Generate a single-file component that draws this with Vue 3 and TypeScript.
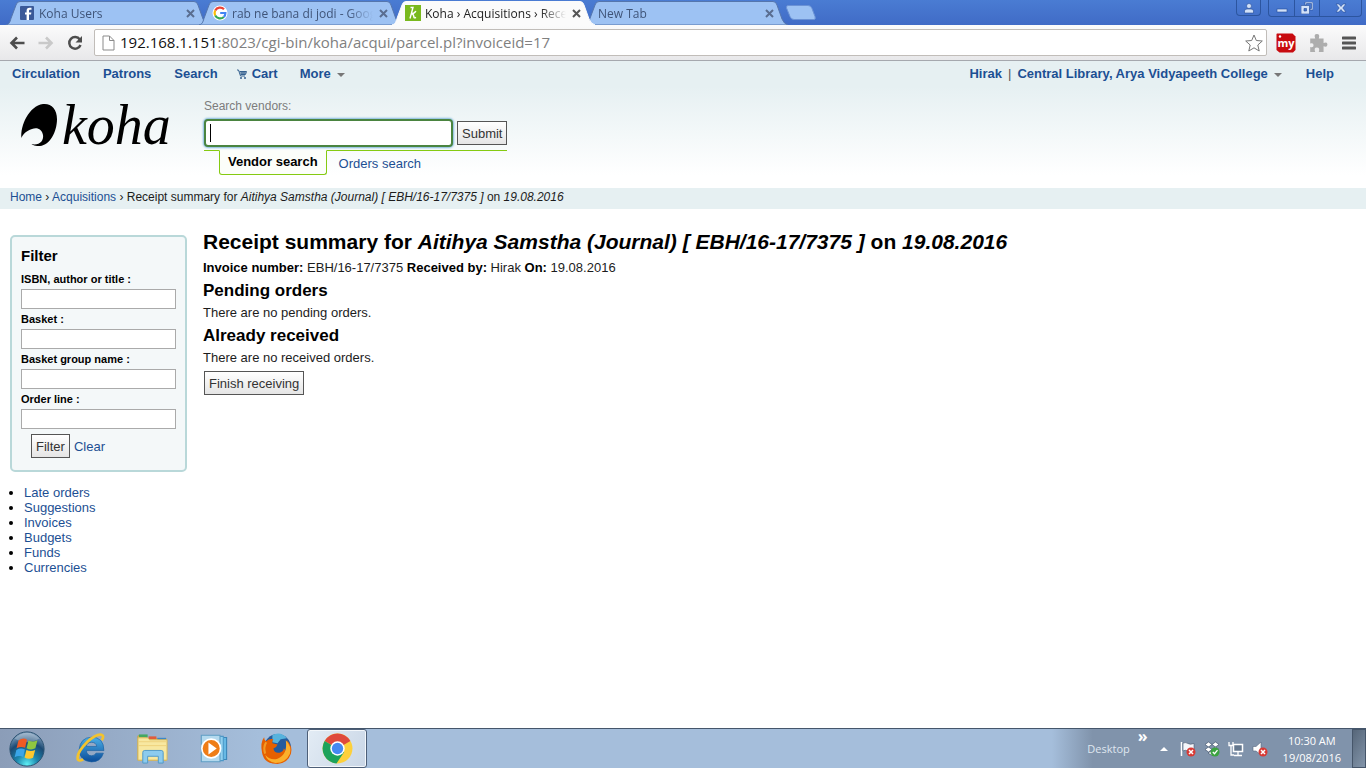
<script setup lang="ts">
import { ref } from 'vue'

interface Tab { title: string; icon: '' | 'facebook' | 'google' | 'koha'; active: boolean }

const tabs: Tab[] = [
  { title: 'Koha Users', icon: 'facebook', active: false },
  { title: 'rab ne bana di jodi - Goog', icon: 'google', active: false },
  { title: 'Koha › Acquisitions › Rece', icon: 'koha', active: true },
  { title: 'New Tab', icon: '', active: false },
]
const fields: { id: string; label: string }[] = [
  { id: 'isbn', label: 'ISBN, author or title :' },
  { id: 'basket', label: 'Basket :' },
  { id: 'group', label: 'Basket group name :' },
  { id: 'order', label: 'Order line :' },
]
const links: string[] = ['Late orders', 'Suggestions', 'Invoices', 'Budgets', 'Funds', 'Currencies']
const vendor = ref('')
</script>

<template>
  <div class="screen">
    <header class="strip">
      <div v-for="tab in tabs" :key="tab.title" class="tab" :class="{ active: tab.active }">
        <svg class="shape" viewBox="0 0 203 24" preserveAspectRatio="none" aria-hidden="true">
          <path d="M0 24 C4 23 4 20 5.500 16 L10 4 Q11 .5 14 .5 H188 Q191 .5 192 4 L197 18 Q199 23 203 24Z" />
        </svg>
        <svg v-if="tab.icon === 'facebook'" class="favicon" viewBox="0 0 16 16" aria-hidden="true">
          <rect x="1" y="1" width="14" height="14" rx="1" fill="#3b5998" />
          <path d="M10 15V9.600h2l.4-2.200H10V6c0-.8.4-1.200 1.300-1.200h1.200v-2h-1.900C8.500 2.800 7.600 4 7.600 5.700v1.700H6v2.200h1.600V15z" fill="#fff" />
        </svg>
        <svg v-else-if="tab.icon === 'google'" class="favicon" viewBox="0 0 16 16" aria-hidden="true">
          <circle cx="8" cy="8" r="7.500" fill="#fff" />
          <g fill="none" stroke-width="2.200">
            <path d="M12 4.200A5.500 5.500 0 0 0 3.200 5.500" stroke="#ea4335" />
            <path d="M3.200 5.500a5.500 5.500 0 0 0 0 5" stroke="#fbbc05" />
            <path d="M3.200 10.500a5.500 5.500 0 0 0 8.600 1.500" stroke="#34a853" />
            <path d="M11.800 12A5.500 5.500 0 0 0 13.400 8H8.200" stroke="#4285f4" />
          </g>
        </svg>
        <svg v-else-if="tab.icon === 'koha'" class="favicon" viewBox="0 0 16 16" aria-hidden="true">
          <rect width="16" height="16" fill="#79b91e" />
          <path d="M5.500 2.500h2.500L5 13.500M6.300 9q4-1 4.500-3M7 8.800q1.500.2 1.900 3.200.3 1.500 2.100.3" fill="none" stroke="#fff" stroke-width="1.400" />
        </svg>
        <span class="title">{{ tab.title }}</span>
        <button class="close" type="button" aria-label="Close tab">
          <svg viewBox="0 0 9 9"><path d="M1 1l7 7M8 1l-7 7" /></svg>
        </button>
      </div>
      <button class="newtab" type="button" aria-label="Open new tab">
        <svg viewBox="0 0 32 15"><path d="M3 .5h20q3 0 4 3l3 8q1 3-1 3H9q-3 0-4-3L1.500 3Q1 .5 3 .5z" /></svg>
      </button>
      <div class="window">
        <button class="user" type="button" aria-label="Profile"><svg viewBox="0 0 12 12"><circle cx="6" cy="4" r="2.500" /><path d="M1.500 11V9q0-2 2.500-2h4q2.500 0 2.500 2v2z" /></svg></button>
        <div class="group">
          <button type="button" aria-label="Minimise"><svg viewBox="0 0 12 12"><rect x="1" y="7" width="10" height="3" /></svg></button>
          <button type="button" aria-label="Restore"><svg viewBox="0 0 12 12"><path d="M4 0h8v8H9V6.500h1.500v-5h-5V3H4z M0 3.500h8.500V12H0z M3 6.500V9h2.500V6.500z" fill-rule="evenodd" /></svg></button>
          <button class="wide" type="button" aria-label="Close"><svg viewBox="0 0 12 12"><path d="M1 2h3l2 2.500L8 2h3L7.800 6 11 10H8L6 7.500 4 10H1l3.200-4z" /></svg></button>
        </div>
      </div>
    </header>

    <div class="toolbar">
      <button type="button" aria-label="Back"><svg viewBox="0 0 16 16"><path d="M15.500 8H3M8 2.500L2.500 8 8 13.500" fill="none" stroke="#4d4d4d" stroke-width="2.600" /></svg></button>
      <button type="button" aria-label="Forward"><svg viewBox="0 0 16 16"><path d="M.5 8h12.500M8 2.500L13.500 8 8 13.500" fill="none" stroke="#c9c9c9" stroke-width="2.600" /></svg></button>
      <button type="button" aria-label="Reload"><svg viewBox="0 0 16 16"><path d="M12.800 4.500A5.800 5.800 0 1 0 13.500 10" fill="none" stroke="#4d4d4d" stroke-width="2.500" /><path d="M15 1v6.500H8.500z" fill="#4d4d4d" /></svg></button>
      <div class="address">
        <svg class="page" viewBox="0 0 13 16" aria-hidden="true"><path d="M1 1h6.500L12 5.500V15H1zM7.500 1v4.500H12" fill="#fff" stroke="#8b8b8b" /></svg>
        <span class="url"><b>192.168.1.151</b>:8023/cgi-bin/koha/acqui/parcel.pl?invoiceid=17</span>
        <button class="star" type="button" aria-label="Bookmark this page"><svg viewBox="0 0 18 18"><path d="M9 1l2.300 5.500 6 .5-4.500 4 1.400 6L9 13.800 3.800 17l1.400-6L.7 7l6-.5z" fill="#fff" stroke="#777" /></svg></button>
      </div>
      <button class="ext" type="button"><svg viewBox="0 0 20 20" aria-hidden="true"><path d="M1 .5h15.500l3 3V17l-2.500 2.500H3.500L.5 17V1z" fill="#c80b10" /><circle cx="4" cy="3.500" r="1.200" fill="#fff" /><text x="10" y="14" text-anchor="middle" font-family="Open Sans, sans-serif" font-weight="700" font-size="11" fill="#fff">my</text></svg></button>
      <button class="ext" type="button" aria-label="Extension"><svg viewBox="0 0 18 18"><path d="M2 5h4.500Q5 1 8 1t1.700 4H14v4q3.500-1.500 3.500 1.300T14 12v5H9.700Q11 13 8 13t-1.500 4H2v-4.500q3 1 3-1.500T2 9.500z" fill="#adadad" /></svg></button>
      <button class="menu" type="button" aria-label="Menu"><svg viewBox="0 0 14 14"><path d="M1 2h12M1 7h12M1 12h12" stroke="#555" stroke-width="3" stroke-linecap="round" /></svg></button>
    </div>

    <main class="site">
      <div class="masthead">
        <nav class="nav">
          <a href="#">Circulation</a>
          <a href="#">Patrons</a>
          <a href="#">Search</a>
          <a href="#" class="cart"><svg viewBox="0 0 10 10" aria-hidden="true"><path d="M0 1h1.500l2 6H8M2.500 2.500h7L8.500 5.500h-5M5 2.500v3M7 2.500v3M3 4h6" fill="none" stroke="#34618f" /><circle cx="4" cy="9" r="1" fill="#34618f" /><circle cx="8" cy="9" r="1" fill="#34618f" /></svg>Cart</a>
          <a href="#" class="more">More<i class="caret"></i></a>
          <div class="account">
            <a href="#">Hirak</a><span class="bar">|</span><a href="#">Central Library, Arya Vidyapeeth College<i class="caret"></i></a><a href="#" class="help">Help</a>
          </div>
        </nav>
        <div class="brand">
          <a class="logo" href="#" aria-label="koha">
            <svg viewBox="0 0 38 44" aria-hidden="true"><path d="M23 1C31 0 37 6 37 16C37 29 30 42 20 43C15 43.500 11 41 11 41C19 43 24 38 23 32C22 26 17 24 12 26C6 28 3 31 1.500 35C0 23 9 3 23 1Z" fill="#000" /></svg>
            <span>koha</span>
          </a>
          <form class="search" @submit.prevent>
            <label for="vendor">Search vendors:</label>
            <div class="row">
              <span class="box"><input id="vendor" v-model="vendor" type="text" autocomplete="off" /><i class="cursor"></i></span>
              <button class="push" type="submit">Submit</button>
            </div>
            <div class="modes"><a href="#" class="on">Vendor search</a><a href="#">Orders search</a></div>
          </form>
        </div>
      </div>

      <div class="crumbs"><a href="#">Home</a> › <a href="#">Acquisitions</a> › Receipt summary for <em>Aitihya Samstha (Journal) [ EBH/16-17/7375 ]</em> on <em>19.08.2016</em></div>

      <div class="columns">
        <aside>
          <form class="filter" @submit.prevent>
            <h4>Filter</h4>
            <div v-for="field in fields" :key="field.id" class="field">
              <label :for="field.id">{{ field.label }}</label>
              <input :id="field.id" type="text" />
            </div>
            <div class="actions"><button class="push" type="submit">Filter</button><a href="#">Clear</a></div>
          </form>
          <ul><li v-for="link in links" :key="link"><a href="#">{{ link }}</a></li></ul>
        </aside>
        <section class="content">
          <h1>Receipt summary for <em>Aitihya Samstha (Journal) [ EBH/16-17/7375 ]</em> on <em>19.08.2016</em></h1>
          <p><b>Invoice number:</b> EBH/16-17/7375 <b>Received by:</b> Hirak <b>On:</b> 19.08.2016</p>
          <h2>Pending orders</h2>
          <p>There are no pending orders.</p>
          <h2>Already received</h2>
          <p>There are no received orders.</p>
          <button class="push" type="button">Finish receiving</button>
        </section>
      </div>
    </main>

    <footer class="taskbar">
      <button class="start" type="button" aria-label="Start">
        <svg viewBox="0 0 40 40">
          <defs>
            <radialGradient id="orb" cx=".5" cy=".95" r=".9"><stop offset="0" stop-color="#5ff0f5" /><stop offset=".35" stop-color="#1c86ad" /><stop offset=".7" stop-color="#1b4a74" /><stop offset="1" stop-color="#7d9cba" /></radialGradient>
          </defs>
          <circle cx="20" cy="20" r="18" fill="url(#orb)" stroke="#29506f" />
          <path d="M7 9Q20-3 33 9 20 17 7 9z" fill="#fff" opacity=".25" />
          <path d="M11 11q5-3.500 9-.8l-2 8.600q-4.500-2.200-9 .5z" fill="#ee5a24" />
          <path d="M21.500 11q4.500 2.200 9.500-.3l-2.200 8.600q-4.800 2.300-9.200-.2z" fill="#8fc740" />
          <path d="M8.800 21q4.500-2.700 9-.5L16 28.500q-4.500-2.200-9 .3z" fill="#3aa5e8" />
          <path d="M19.400 21q4.500 2.200 9.200.1l-2.200 8q-4.500 2.200-9-.2z" fill="#fdc82f" />
        </svg>
      </button>
      <button type="button" aria-label="Internet Explorer">
        <svg viewBox="0 0 32 32">
          <defs><linearGradient id="ie" x1="0" y1="0" x2="0" y2="1"><stop offset="0" stop-color="#4bb0e8" /><stop offset="1" stop-color="#0b4c99" /></linearGradient></defs>
          <path d="M29 18H12q.5 5 5 5 3.200 0 4.300-2.500H28.500Q26 29 17 29 5 28 5 17 6 5.500 17 5 29 5 29 18zM12 14h10q-.6-4-5-4t-5 4z" fill="url(#ie)" stroke="#175f9f" stroke-width=".6" />
          <path d="M27 8q3-5-1-5.500-5-.5-13 7-9 9-9.500 15-.2 5 5.500 2" fill="none" stroke="#f3c32e" stroke-width="2.600" />
        </svg>
      </button>
      <button type="button" aria-label="Explorer">
        <svg viewBox="0 0 34 32">
          <path d="M2 3h8l1 3h20v22H2z" fill="#e9cf72" stroke="#c5a13e" />
          <path d="M3 1.500h9v3H3z" fill="#43a860" /><path d="M13 3.500h8v3h-8z" fill="#e05c3c" /><path d="M22 5h9v3h-9z" fill="#3b87c9" />
          <path d="M2 5h10l2 2h18v21H2z" fill="#f8e8a0" stroke="#d6b75c" />
          <path d="M3 9h28M3 13h28" stroke="#ecd27d" />
          <path d="M7 31V20q0-2 2-2h17q2 0 2 2v11h-5v-7H12v7z" fill="#8ccbee" stroke="#5199c8" />
        </svg>
      </button>
      <button type="button" aria-label="Media Player">
        <svg viewBox="0 0 30 30">
          <path d="M9 5h17v20H9z" fill="#67b9e5" stroke="#3c87b9" /><path d="M6 4h17v22H6z" fill="#91d0ef" stroke="#4c98c7" /><path d="M3 3h17v24H3z" fill="#b3d9ee" stroke="#609fc5" />
          <circle cx="12" cy="15" r="8.500" fill="#ee7d17" stroke="#fff" stroke-width="1.500" /><path d="M9.500 9.500v11l7.500-5.500z" fill="#fff" />
        </svg>
      </button>
      <button type="button" aria-label="Firefox">
        <svg viewBox="0 0 32 32">
          <circle cx="17" cy="15" r="13" fill="#245b9d" /><path d="M12 3q8-4 14 3l-6 1-3 4-5-1z" fill="#57b3dd" />
          <path d="M4 5q0 3 2 4 3-3 7-2-2 2-1 4l5 1q-1 3-4 4 1 5 6 4 4-1 4-4 3 2 1 5 5-5 2-13 6 6 4 13-3 9-13 10Q4 31 2 20 0 10 4 5z" fill="#e66000" />
          <path d="M25 8q6 6 4 13-4 9-14 9-8-1-10-8 5 6 12 4 10-4 8-18z" fill="#fbb02c" />
          <path d="M6 10q-3 5-1 11" fill="none" stroke="#f39a25" stroke-width="2" />
        </svg>
      </button>
      <button class="current" type="button" aria-label="Chrome">
        <svg viewBox="0 0 32 32">
          <circle cx="16" cy="16" r="14.500" fill="#fdd03b" />
          <path d="M16 16L3.500 8.700A14.500 14.500 0 0 1 28.500 8.700z" fill="#df4a3d" />
          <path d="M16 16L3.500 8.700A14.500 14.500 0 0 0 15 30.500L22.500 19.500z" fill="#1ca25b" />
          <path d="M16 9h12.700L16 8.700z" fill="#df4a3d" />
          <circle cx="16" cy="16" r="7" fill="#fff" /><circle cx="16" cy="16" r="5.500" fill="#4589f2" />
        </svg>
      </button>
      <div class="tray">
        <span class="desktop">Desktop</span>
        <span class="chevrons">»</span>
        <svg class="up" viewBox="0 0 8 8" aria-hidden="true"><path d="M4 2l4 4H0z" fill="#fff" /></svg>
        <svg viewBox="0 0 16 16" aria-hidden="true"><path d="M1.500 1v14" stroke="#fff" stroke-width="1.500" /><path d="M3 2q3-1 5 .5t6 0v8q-3 1-6-.5T3 10z" fill="#f5f7fb" stroke="#44556b" stroke-width=".6" /><circle cx="11" cy="11" r="4.500" fill="#d83a35" /><path d="M9 9l4 4M13 9l-4 4" stroke="#fff" stroke-width="1.500" /></svg>
        <svg viewBox="0 0 16 16" aria-hidden="true"><path d="M4.500 1L8 3.500 4.500 6 1 3.500zM11.500 1L15 3.500 11.500 6 8 3.500zM4.500 6L8 8.500 4.500 11 1 8.500zM11.500 6L15 8.500 11.500 11 8 8.500zM4 12l4-2.500 4 2.500-4 2.500z" fill="#fff" stroke="#33475f" stroke-width=".6" /><circle cx="11" cy="11" r="4.500" fill="#3ba340" /><path d="M8.800 11l1.700 1.700 3-3.500" fill="none" stroke="#fff" stroke-width="1.300" /></svg>
        <svg viewBox="0 0 16 16" aria-hidden="true"><path d="M5.500 3.500h9v7h-9z" fill="#65788f" stroke="#fff" stroke-width="1.500" /><path d="M10 11v3M6 14.500h8M1 1v3.500h4V1M3 4.500v9.500h3" fill="none" stroke="#fff" stroke-width="1.300" /></svg>
        <svg viewBox="0 0 16 16" aria-hidden="true"><path d="M1 5.500h3L9 1v13L4 10H1z" fill="#fff" stroke="#55677d" stroke-width=".6" /><circle cx="11" cy="11" r="4.500" fill="#d83a35" /><path d="M9 9l4 4M13 9l-4 4" stroke="#fff" stroke-width="1.500" /></svg>
        <div class="clock"><span>10:30 AM</span><span>19/08/2016</span></div>
        <button class="peek" type="button" aria-label="Show desktop"></button>
      </div>
    </footer>
  </div>
</template>

<style>
body { background: #fff; }
</style>

<style scoped>
* { box-sizing: border-box; }
svg { display: block; }
button { margin: 0; padding: 0; border: 0; background: none; font-family: inherit; }
.screen { min-height: 100vh; display: flex; flex-direction: column; font-family: "Liberation Sans", Arial, sans-serif; font-size: 13px; line-height: 15px; color: #1c1c1c; }

.strip { display: flex; height: 25px; padding: 1px 0 0 6px; background: linear-gradient(#4a7cd3, #406bc6); font-family: "Open Sans", "Noto Sans", sans-serif; font-size: 12px; }
.tab { position: relative; display: flex; align-items: center; width: 203px; height: 24px; margin-right: -10px; padding: 0 12px 0 13px; color: #3f5478; }
.tab.active { z-index: 1; color: #222; }
.shape { position: absolute; inset: 0; width: 100%; height: 100%; fill: #9dc2f3; stroke: #5576ad; stroke-width: 1; }
.active .shape { fill: #fbfbfb; stroke: #fbfbfb; }
.favicon { position: relative; flex: none; width: 16px; height: 16px; margin-right: 4px; }
.title { position: relative; flex: 1; overflow: hidden; white-space: nowrap; mask-image: linear-gradient(90deg, #000 82%, transparent); }
.close { position: relative; margin-left: 4px; padding: 2px; }
.close svg { width: 9px; height: 9px; stroke: #596d90; stroke-width: 2; }
.active .close svg { stroke: #555; }
.newtab { align-self: flex-start; margin: 4px 0 0 7px; }
.newtab svg { width: 32px; height: 15px; fill: #9dc2f3; stroke: #6b92d5; }
.window { display: flex; align-items: flex-start; gap: 7px; height: 16px; margin: -1px 4px 0 auto; }
.window button { display: grid; place-items: center; width: 25px; height: 16px; }
.window svg { width: 12px; height: 12px; fill: #d3e2f8; stroke: #244c98; stroke-width: .6; }
.window .user, .group { border: 1px solid #2c559f; border-top: 0; border-radius: 0 0 4px 4px; }
.group { display: flex; }
.group button + button { border-left: 1px solid #2c559f; }
.window .wide { width: 42px; }

.toolbar { display: flex; align-items: center; height: 36px; padding: 0 10px 0 9px; border-bottom: 1px solid #a5a8ae; background: linear-gradient(#fbfbfb, #e8e8ea); }
.toolbar > button svg { width: 16px; height: 16px; }
.toolbar > button { margin-right: 13px; }
.address { display: flex; align-items: center; flex: 1; height: 27px; margin: 0 9px 0 -2px; padding: 0 3px 0 7px; border: 1px solid #c1bdb9; border-radius: 2px; background: #fff; }
.page { width: 13px; height: 16px; margin-right: 5px; }
.url { flex: 1; padding-bottom: 2px; font-family: "Open Sans", "Noto Sans", sans-serif; font-size: 15px; line-height: 24px; color: #808080; }
.url b { font-weight: 400; color: #111; }
.star svg { width: 18px; height: 18px; }
.toolbar > .ext { margin-right: 12px; }
.toolbar > .ext svg { width: 20px; height: 20px; }
.toolbar > .menu { margin: 0 0 0 2px; }
.toolbar > .menu svg { width: 14px; height: 14px; }

.site { flex: 1; background: #fff; }
a { color: #1c4f93; text-decoration: none; }
.masthead { height: 127px; background: linear-gradient(#e6f0f2, #e6f0f2 20%, #fff 90%); }
.nav { display: flex; padding: 5px 32px 0 12px; font-weight: 700; }
.nav > a { margin-right: 23px; }
.nav > .cart { display: flex; align-items: center; margin: 0 22px 0 -4px; }
.cart svg { width: 10px; height: 10px; margin-right: 5px; }
.caret { display: inline-block; margin: 0 0 1px 6px; border: 4px solid transparent; border-top-color: #777; border-bottom: 0; }
.account { display: flex; margin-left: auto; }
.bar { margin: 0 6px; font-weight: 400; color: #555; }
.help { margin-left: 24px; }
.brand { display: flex; padding-left: 20px; }
.logo { display: flex; width: 184px; padding-top: 22px; color: #000; font: italic 56px/44px "Liberation Serif", serif; }
.logo svg { width: 38px; height: 44px; margin-right: 4px; }
.search { padding-top: 18px; }
.search label { display: block; font-size: 12px; line-height: 15px; color: #7c7c7c; }
.row { display: flex; align-items: center; gap: 4px; margin-top: 5px; }
.box { position: relative; display: flex; }
.box input { width: 249px; height: 28px; border: 2px solid #4a8440; border-radius: 4px; box-shadow: 0 0 2px 1px #7fb8dc; outline: none; background: #fff; }
.cursor { position: absolute; left: 6px; top: 5px; width: 1px; height: 18px; background: #000; }
.push { height: 24px; padding: 0 4px; border: 1px solid #555; background: linear-gradient(#fff, #e5e5e5); font-size: 13px; line-height: 15px; color: #333; white-space: nowrap; }
.modes { display: flex; align-items: flex-start; margin-top: 3px; padding-left: 15px; border-top: 1px solid #85ca11; }
.modes a { padding: 5px 9px 0 12px; }
.modes .on { height: 25px; margin-top: -1px; padding: 3px 8px 5px; border: 1px solid #85ca11; border-top-color: #fbfdfb; border-radius: 0 0 3px 3px; background: #fcfefa; font-weight: 700; color: #000; }
.crumbs { min-height: 21px; padding: 2px 10px; background: #e6f0f2; font-size: 12px; }

.columns { display: flex; align-items: flex-start; gap: 16px; padding: 20px 10px; }
aside { flex: none; width: 177px; padding-top: 6px; }
.filter { padding: 10px 9px 12px; border: 2px solid #b9d8d9; border-radius: 5px; background: #f4f8f9; }
h4 { margin: 0 0 7px; font-size: 15px; line-height: 18px; color: #000; }
.field label { display: block; padding-bottom: 3px; font-size: 11px; font-weight: 700; line-height: 14px; color: #000; }
.field input { display: block; width: 100%; height: 20px; margin-bottom: 3px; border: 1px solid #aaa; border-radius: 0; background: #fff; }
.actions { display: flex; align-items: center; gap: 4px; margin: 5px 0 0 10px; }
ul { margin: 13px 0; padding-left: 14px; }
li::marker { color: #000; }
.content { min-width: 0; }
h1 { margin: 0 0 5px; font-size: 21px; line-height: 25px; color: #000; }
h2 { margin: 0 0 3px; font-size: 17px; line-height: 20px; color: #000; }
p { margin: 0 0 4px; line-height: 18px; }
.content .push { margin-left: 1px; }
.content b { color: #000; }

.taskbar { display: flex; height: 40px; border-top: 1px solid #45566b; background: linear-gradient(90deg, #8b9db8, #a5bedb 19%, #a5bedb 77%, #8093ab 80%, #8093ab); }
.taskbar > button { display: grid; place-items: center; width: 62px; }
.taskbar > button svg { width: 33px; height: 33px; }
.taskbar > .start { width: 59px; padding-right: 5px; }
.taskbar > .start svg { width: 38px; height: 38px; }
.taskbar > .current { width: 60px; border: 1px solid #4d5f78; border-radius: 3px; background: linear-gradient(120deg, #e3ecf5, #c9d6e6); box-shadow: inset 0 0 0 1px #f3f7fb; }
.tray { display: flex; align-items: center; gap: 8px; margin-left: auto; color: #fff; font-family: "Open Sans", "Noto Sans", sans-serif; font-size: 12px; }
.tray svg { width: 16px; height: 16px; }
.tray .up { width: 8px; height: 8px; margin: 0 4px; }
.desktop { color: #dfe6ef; font-size: 11px; }
.chevrons { align-self: flex-start; font-size: 16px; font-weight: 700; }
.clock { display: flex; flex-direction: column; align-items: center; margin: 0 3px 0 7px; font-size: 11px; line-height: 17px; }
.peek { align-self: stretch; width: 14px; border: 1px solid #46566a; background: linear-gradient(120deg, #566679, #8395aa); }
</style>
